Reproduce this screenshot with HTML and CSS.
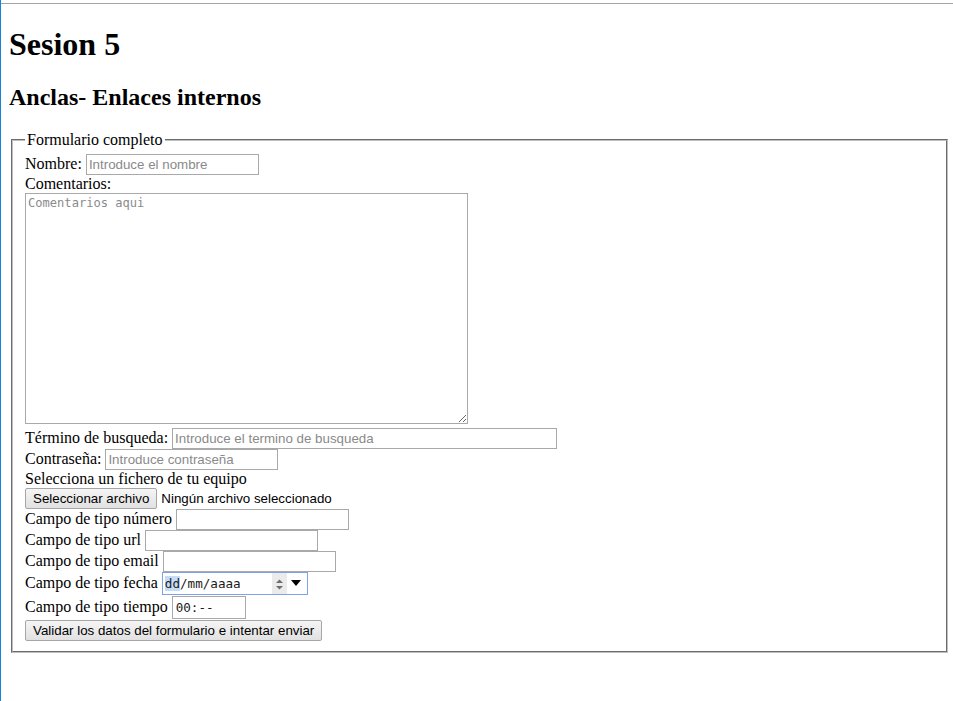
FILE: index.html
```html
<!DOCTYPE html>
<html lang="es">
<head>
<meta charset="utf-8">
<title>Sesion 5</title>
<link rel="stylesheet" href="styles.css">
</head>
<body>
<h1 class="title">Sesion 5</h1>
<h2 class="subtitle">Anclas- Enlaces internos</h2>
<form class="form">
<fieldset class="set">
<legend class="legend">Formulario completo</legend>
<label>Nombre:</label> <input class="field w173" type="text" placeholder="Introduce el nombre"><br>
<label>Comentarios:</label><br>
<textarea class="area" placeholder="Comentarios aqui"></textarea><br>
<label>Término de busqueda:</label> <input class="field w385" type="text" placeholder="Introduce el termino de busqueda"><br>
<label>Contraseña:</label> <input class="field w173" type="password" placeholder="Introduce contraseña"><br>
<label>Selecciona un fichero de tu equipo</label><br>
<span class="file"><button class="btn" type="button">Seleccionar archivo</button> <span class="file-name">Ningún archivo seleccionado</span></span><br>
<label>Campo de tipo número</label> <input class="field w173" type="text"><br>
<label>Campo de tipo url</label> <input class="field w173" type="text"><br>
<label>Campo de tipo email</label> <input class="field w173" type="text"><br>
<label>Campo de tipo fecha</label> <span class="date"><span class="mono"><span class="seg-sel">dd</span>/mm/aaaa</span><span class="spin"><svg width="15" height="21" viewBox="0 0 15 21"><path d="M4 10 L7.5 6.5 L11 10 Z" fill="#6d6d6d"/><path d="M4 13 L7.5 16.5 L11 13 Z" fill="#6d6d6d"/></svg></span><span class="drop"><svg width="10" height="6" viewBox="0 0 10 6"><path d="M0 0 H10 L5 6 Z" fill="#000"/></svg></span></span><br>
<label>Campo de tipo tiempo</label> <span class="time"><span class="mono">00:--</span></span><br>
<button class="btn" type="button">Validar los datos del formulario e intentar enviar</button>
</fieldset>
</form>
</body>
</html>
```

FILE: styles.css
```css
html {
  border-left: 1px solid #1683d8;
  min-height: 100%;
  box-sizing: border-box;
  background: linear-gradient(#a3a3a3, #a3a3a3) 0 3px / 100% 1px no-repeat, #fff;
}

body {
  margin: 8px 5px 8px 8px;
  font-family: "Liberation Serif", "Times New Roman", serif;
  font-size: 16px;
  color: #000;
}

.title {
  font-size: 32px;
  margin: 18px 0 21.44px;
}

.subtitle {
  font-size: 24px;
  margin: 19.92px 0;
}

.form {
  margin: 0;
}

.set {
  margin: 0 0 0 2px;
  padding: 4.6px 12px 10px;
  border: 2px groove #c0c0c0;
}

.legend {
  padding: 0 2px;
}

.field {
  box-sizing: border-box;
  height: 21px;
  margin: 0;
  padding: 1px 2px;
  border: 1px solid #a9a9a9;
  font-family: "Liberation Sans", Arial, sans-serif;
  font-size: 13.33px;
  color: #000;
  background: #fff;
}

.field::placeholder {
  color: #8a8a8a;
}

.w173 { width: 173px; }
.w385 { width: 385px; }

.area {
  box-sizing: border-box;
  width: 443px;
  height: 231px;
  margin: 0;
  padding: 2px;
  border: 1px solid #a9a9a9;
  font-family: "DejaVu Sans Mono", "Liberation Mono", monospace;
  font-size: 12.08px;
  resize: both;
}

.area::placeholder {
  color: #8a8a8a;
}

.btn {
  box-sizing: border-box;
  height: 21px;
  margin: 0;
  padding: 1px 7px;
  border: 1px solid #a6a6a6;
  border-radius: 2px;
  background: linear-gradient(#f5f5f5, #e1e1e1);
  font-family: "Liberation Sans", Arial, sans-serif;
  font-size: 13.33px;
  color: #000;
}

.file-name {
  font-family: "Liberation Sans", Arial, sans-serif;
  font-size: 13.33px;
}

.mono {
  font-family: "DejaVu Sans Mono", "Liberation Mono", monospace;
  font-size: 12.6px;
  color: #1a1a1a;
}

.date {
  display: inline-flex;
  align-items: center;
  box-sizing: border-box;
  width: 146px;
  height: 23px;
  padding: 0 6px 0 2px;
  border: 1px solid #7da3e4;
  background: #fff;
}

.date .mono {
  flex: 1;
}

.seg-sel {
  background: #c5dbf7;
}

.spin {
  display: flex;
  background: #ebebeb;
  height: 21px;
  margin-right: 4px;
}

.drop {
  display: flex;
  align-items: center;
}

.time {
  display: inline-flex;
  align-items: center;
  box-sizing: border-box;
  width: 74px;
  height: 23px;
  margin: 1px 0 1px;
  padding: 0 3px;
  border: 1px solid #a9a9a9;
  background: #fff;
}
```
